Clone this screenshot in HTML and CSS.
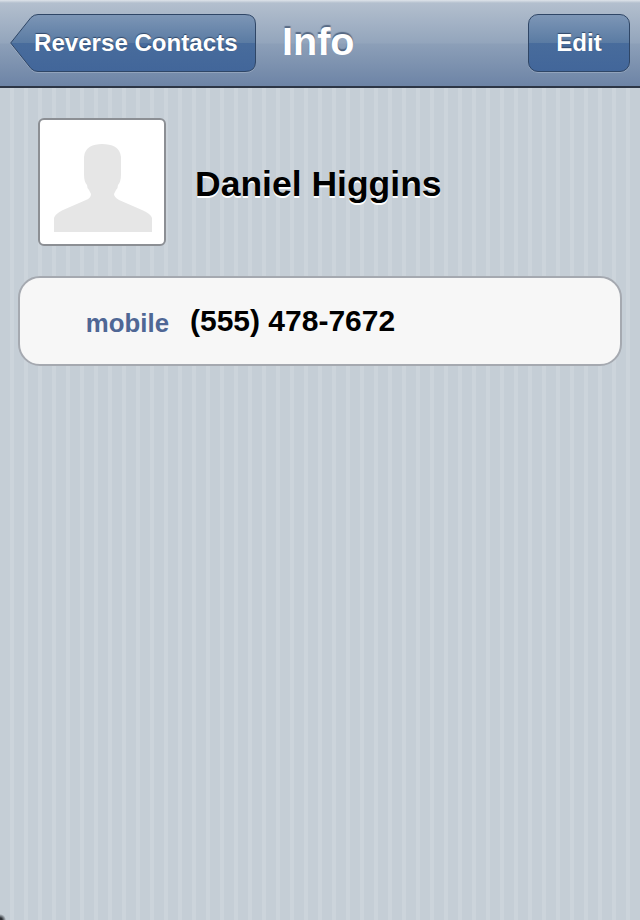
FILE: index.html
```html
<!DOCTYPE html>
<html lang="en">
<head>
  <meta charset="UTF-8">
  <meta name="viewport" content="width=device-width, initial-scale=1.0">
  <title>Info</title>
  <link rel="stylesheet" href="styles.css">
</head>
<body>
  <header class="navbar">
    <a class="back-button">
      <svg class="back-shape" width="246" height="58" viewBox="0 0 246 58">
        <defs>
          <linearGradient id="back-fill" x1="0" y1="0" x2="0" y2="1">
            <stop offset="0" stop-color="#7d96b6"/>
            <stop offset="0.5" stop-color="#5a7ba3"/>
            <stop offset="0.5" stop-color="#486c9c"/>
            <stop offset="1" stop-color="#42669a"/>
          </linearGradient>
        </defs>
        <path d="M.7 29 L21 3.5 Q24 .5 28 .5 L235 .5 Q245.5 .5 245.5 10 L245.5 48 Q245.5 57.5 235 57.5 L28 57.5 Q24 57.5 21 54.5 Z" fill="url(#back-fill)" stroke="#2f4666" stroke-width="1"/>
      </svg>
      <span class="button-label">Reverse Contacts</span>
    </a>
    <h1 class="nav-title">Info</h1>
    <a class="edit-button"><span class="button-label">Edit</span></a>
  </header>

  <main class="content">
    <div class="person">
      <div class="avatar">
        <svg width="98" height="88" viewBox="0 0 98 88">
          <path d="M0 88 L0 74 Q1 70 9 66 L32 56 Q37 54 37 50 L35 46 Q33 44 33 41 Q30 38 30 30 L30 13 C31 3 39 0 48 0 C58 0 66 3 67 13 L67 30 Q67 38 64 41 Q64 44 62 46 L60 50 Q60 53 65 56 L88 66 Q97 70 98 74 L98 88 Z" fill="#e6e6e6"/>
        </svg>
      </div>
      <div class="person-name">Daniel Higgins</div>
    </div>

    <div class="info-card">
      <span class="info-label">mobile</span>
      <span class="info-value">(555) 478-7672</span>
    </div>
  </main>
</body>
</html>
```

FILE: styles.css
```css
html, body {
  margin: 0;
  padding: 0;
}

body {
  width: 640px;
  height: 920px;
  overflow: hidden;
  font-family: 'Liberation Sans', Arial, sans-serif;
  background-color: #c5ced6;
  background-image:
    radial-gradient(circle at 0 100%, #2a2e33 0, #2a2e33 2px, rgba(198, 207, 215, 0) 6px),
    repeating-linear-gradient(90deg, #c5ced6 0, #c5ced6 10px, #ccd4db 10px, #ccd4db 14px);
}

.navbar {
  display: flex;
  align-items: flex-start;
  height: 72px;
  padding: 14px 10px 0 10px;
  border-bottom: 2px solid #2d3645;
  background: linear-gradient(#dfe4ea 0, #b3bfce 3px, #93a5bc 43px, #8c9fb8 44px, #6d84a6 86px);
}

.back-button {
  position: relative;
  display: flex;
  align-items: center;
  width: 246px;
  height: 58px;
}

.back-shape {
  position: absolute;
  left: 0;
  top: 0;
  filter: drop-shadow(0 1px 0 rgba(255, 255, 255, 0.2));
}

.back-button .button-label {
  position: relative;
  margin-left: 24px;
}

.button-label {
  color: #fff;
  font-size: 24.1px;
  font-weight: bold;
  text-shadow: 0 -1px 1px rgba(30, 50, 80, 0.7);
}

.nav-title {
  margin: 4px 0 0 26px;
  color: #fff;
  font-size: 39.6px;
  line-height: 46px;
  font-weight: bold;
  text-shadow: 0 -2px 1px rgba(40, 60, 90, 0.6);
}

.edit-button {
  display: flex;
  align-items: center;
  justify-content: center;
  box-sizing: border-box;
  width: 102px;
  height: 58px;
  margin-left: auto;
  border: 1px solid #2f4666;
  border-radius: 10px;
  background: linear-gradient(#7d96b6 0, #5a7ba3 50%, #486c9c 50%, #42669a 100%);
  box-shadow: 0 1px 0 rgba(255, 255, 255, 0.2);
}

.content {
  padding: 30px 18px 0 18px;
}

.person {
  display: flex;
  align-items: center;
  padding-left: 20px;
}

.avatar {
  display: flex;
  align-items: flex-end;
  justify-content: center;
  box-sizing: border-box;
  width: 128px;
  height: 128px;
  padding: 0 0 12px 2px;
  background: #fff;
  border: 2px solid #8c8f94;
  border-radius: 6px;
}

.person-name {
  margin: 5px 0 0 29px;
  color: #000;
  font-size: 35.5px;
  font-weight: bold;
  text-shadow: 0 2px 0 #fff;
}

.info-card {
  display: flex;
  align-items: center;
  box-sizing: border-box;
  height: 90px;
  margin-top: 30px;
  background: #f7f7f7;
  border: 2px solid #a5a9b0;
  border-radius: 22px;
}

.info-label {
  width: 149px;
  margin-top: 5px;
  text-align: right;
  color: #4f6795;
  font-size: 25.8px;
  font-weight: bold;
}

.info-value {
  margin-left: 21px;
  color: #000;
  font-size: 30px;
  font-weight: bold;
}
```
